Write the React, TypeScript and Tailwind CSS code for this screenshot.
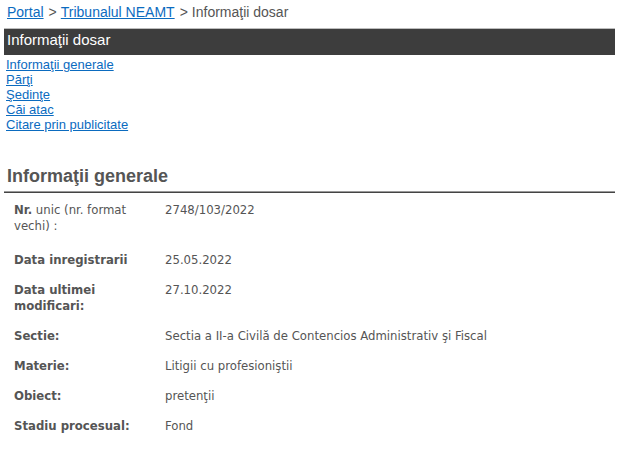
import React from "react";

const rows: { label: React.ReactNode; value: string }[] = [
  {
    label: (
      <>
        <span className="font-bold">Nr.</span> unic (nr. format vechi) :
      </>
    ),
    value: "2748/103/2022",
  },
  { label: <span className="font-bold">Data inregistrarii</span>, value: "25.05.2022" },
  { label: <span className="font-bold">Data ultimei modificari:</span>, value: "27.10.2022" },
  { label: <span className="font-bold">Sectie:</span>, value: "Sectia a II-a Civilă de Contencios Administrativ şi Fiscal" },
  { label: <span className="font-bold">Materie:</span>, value: "Litigii cu profesioniştii" },
  { label: <span className="font-bold">Obiect:</span>, value: "pretenţii" },
  { label: <span className="font-bold">Stadiu procesual:</span>, value: "Fond" },
];

const links = ["Informaţii generale", "Părţi", "Şedinţe", "Căi atac", "Citare prin publicitate"];

export default function App() {
  return (
    <div className="w-[622px] h-[449px] bg-white overflow-hidden" style={{ fontFamily: '"Liberation Sans", Arial, sans-serif' }}>
      <div className="pl-[7px] pt-[4px] text-[14px] leading-[16px] text-[#555]">
        <a href="#" className="text-[#0b6bbf] underline">Portal</a>
        <span className="ml-[5px] mr-[4px]">&gt;</span>
        <a href="#" className="text-[#0b6bbf] underline">Tribunalul NEAMT</a>
        <span className="ml-[5px] mr-[4px]">&gt;</span>
        <span>Informaţii dosar</span>
      </div>
      <div className="mx-[4px] mt-[8px] w-[611px] h-[27px] bg-[#3d3d3d] border-t border-[#bdbdbd] text-white text-[15px] leading-[18px] pl-[3px] pt-[2px]">
        Informaţii dosar
      </div>
      <div className="pl-[6px] pt-[2px] flex flex-col items-start text-[13px] leading-[15px]">
        {links.map((l) => (
          <a key={l} href="#" className="text-[#0b6bbf] underline">{l}</a>
        ))}
      </div>
      <div className="mt-[34px] pl-[7px] text-[18px] leading-[20px] font-bold text-[#555]">Informaţii generale</div>
      <div className="mx-[4px] mt-[5px] w-[611px] h-[2px] bg-[#444] border-t border-[#999]"></div>
      <div
        className="mt-[9px] grid grid-cols-[151px_1fr] text-[13px] leading-[16px] text-[#555]"
        style={{ fontFamily: '"DejaVu Sans Condensed", "DejaVu Sans", Verdana, sans-serif' }}
      >
        {rows.map((r, i) => (
          <React.Fragment key={i}>
            <div className={"pl-[14px] pr-[6px] " + (i === 0 ? "pb-[18px]" : "pb-[14px]")}>{r.label}</div>
            <div className="pl-[14px]">{r.value}</div>
          </React.Fragment>
        ))}
      </div>
    </div>
  );
}
